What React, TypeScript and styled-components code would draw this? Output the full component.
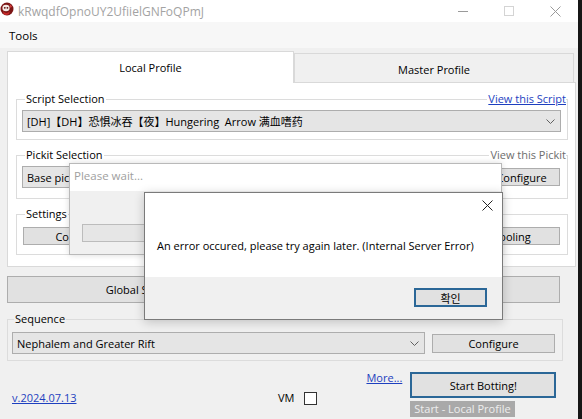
import React from 'react'
import styled, { createGlobalStyle } from 'styled-components'

const GlobalStyle = createGlobalStyle`
  html, body {
    margin: 0;
    padding: 0;
    background: #161616;
  }
  body {
    font-family: 'Open Sans', 'Noto Sans CJK SC', sans-serif;
    font-size: 11px;
    color: #000;
  }
  * {
    box-sizing: border-box;
  }
`

const Screen = styled.div`
  width: 582px;
  height: 419px;
  background: #161616;
  overflow: hidden;
`

const Window = styled.div`
  position: relative;
  width: 578px;
  height: 419px;
  background: #f0f0f0;
  display: flex;
  flex-direction: column;
`

const TitleBar = styled.div`
  height: 22px;
  background: #fff;
  display: flex;
  align-items: center;
`

const AppIcon = styled.svg`
  width: 14px;
  height: 14px;
  align-self: flex-start;
  margin: 2px 4px 0 0;
  flex: none;
`

const TitleText = styled.span`
  font-size: 12px;
  color: #a3a3a3;
`

const Controls = styled.div`
  margin-left: auto;
  display: flex;
  height: 100%;
`

const ControlBox = styled.div`
  width: 46px;
  height: 100%;
  display: flex;
  align-items: center;
  justify-content: center;
`

const MenuBar = styled.div`
  height: 26px;
  background: #f7f7f7;
  display: flex;
  align-items: center;
  padding-left: 9px;
`

const MenuItem = styled.span`
  font-size: 11.5px;
`

const Body = styled.div`
  flex: 1;
  display: flex;
  flex-direction: column;
  padding: 3px 2px 0 7px;
`

const TabStrip = styled.div`
  display: flex;
  align-items: flex-end;
  height: 31px;
`

const Tab = styled.div<{ $active?: boolean; $width: number }>`
  position: relative;
  z-index: ${(p) => (p.$active ? 1 : 0)};
  width: ${(p) => p.$width}px;
  height: ${(p) => (p.$active ? 32 : 29)}px;
  margin-bottom: ${(p) => (p.$active ? -1 : 0)}px;
  padding-top: ${(p) => (p.$active ? 0 : 2)}px;
  background: ${(p) => (p.$active ? '#fff' : '#f0f0f0')};
  border: 1px solid #d9d9d9;
  border-bottom: none;
  display: flex;
  align-items: center;
  justify-content: center;
`

const TabPanel = styled.div`
  height: 185px;
  background: #fff;
  border: 1px solid #d9d9d9;
  padding: 8px 7px 0 8px;
  display: flex;
  flex-direction: column;
  gap: 7px;
`

const GroupWrap = styled.div<{ $width?: number }>`
  position: relative;
  width: ${(p) => (p.$width ? `${p.$width}px` : 'auto')};
`

const Group = styled.fieldset<{ $pad: string }>`
  margin: 0;
  min-width: 0;
  padding: ${(p) => p.$pad};
  border: 1px solid #dcdcdc;
`

const Legend = styled.legend<{ $indent: number }>`
  padding: 0 1px;
  margin-left: ${(p) => p.$indent}px;
  height: 16px;
  line-height: 16px;
`

const CornerLink = styled.span<{ $disabled?: boolean }>`
  position: absolute;
  top: 0;
  right: 2px;
  line-height: 16px;
  padding-left: 1px;
  background: #fff;
  color: ${(p) => (p.$disabled ? '#6d6d6d' : '#1d3fbf')};
  text-decoration: ${(p) => (p.$disabled ? 'none' : 'underline')};
`

const Row = styled.div<{ $gap?: number }>`
  display: flex;
  align-items: center;
  gap: ${(p) => p.$gap ?? 7}px;
`

const ButtonGrid = styled.div`
  display: grid;
  grid-template-columns: 115px 1fr 1fr 96px;
  gap: 8px;
  margin-left: 1px;
`

const Combo = styled.div<{ $width?: number }>`
  flex: ${(p) => (p.$width ? 'none' : 1)};
  width: ${(p) => (p.$width ? `${p.$width}px` : 'auto')};
  min-width: 0;
  height: 22px;
  background: #e5e5e5;
  border: 1px solid #adadad;
  display: flex;
  align-items: center;
  padding: 0 5px 0 4px;
  white-space: nowrap;
  overflow: hidden;
`

const ComboText = styled.span`
  flex: 1;
  overflow: hidden;
`

const Chevron = styled.svg`
  width: 9px;
  height: 5px;
  flex: none;
  margin-top: 1px;
`

const Button = styled.div<{ $width?: number; $height: number; $default?: boolean }>`
  width: ${(p) => (p.$width ? `${p.$width}px` : 'auto')};
  height: ${(p) => p.$height}px;
  flex: none;
  background: #e1e1e1;
  border: ${(p) => (p.$default ? '2px solid #2b6797' : '1px solid #adadad')};
  display: flex;
  align-items: center;
  justify-content: center;
  white-space: nowrap;
  overflow: hidden;
`

const WideRow = styled.div`
  display: flex;
  gap: 7px;
  width: 553px;
  height: 27px;
  margin-top: 9px;
`

const WideButton = styled(Button)`
  height: 100%;
`

const Footer = styled.div`
  display: flex;
  align-items: flex-start;
  padding-left: 5px;
`

const Link = styled.span`
  color: #1d3fbf;
  text-decoration: underline;
  line-height: 16px;
`

const VersionLink = styled(Link)`
  width: 266px;
  margin-top: 29px;
`

const MoreLink = styled(Link)`
  margin: 9px 0 0 49px;
`

const VmBox = styled.div`
  display: flex;
  align-items: center;
  gap: 10px;
  margin-top: 29px;
  line-height: 16px;
`

const CheckBox = styled.div`
  width: 13px;
  height: 13px;
  background: #fff;
  border: 1px solid #333;
`

const StartColumn = styled.div`
  display: flex;
  flex-direction: column;
  align-items: flex-start;
  margin: 11px 0 0 8px;
  gap: 3px;
`

const StatusTag = styled.div`
  height: 16px;
  line-height: 16px;
  padding: 0 4px;
  background: #a9a9a9;
  color: #eeeeee;
`

const WaitDialog = styled.div`
  position: absolute;
  left: 69px;
  top: 163px;
  width: 433px;
  height: 92px;
  background: #f0f0f0;
  border: 1px solid #b9b9b9;
  box-shadow: 0 0 6px rgba(0, 0, 0, 0.15);
  display: flex;
  flex-direction: column;
`

const WaitTitle = styled.div`
  height: 27px;
  background: #fff;
  color: #a0a0a0;
  padding: 4px 0 0 4px;
  font-size: 11.5px;
`

const Progress = styled.div`
  width: 400px;
  height: 18px;
  margin: 33px 0 0 12px;
  background: #e6e6e6;
  border: 1px solid #bcbcbc;
`

const ErrorDialog = styled.div`
  position: absolute;
  left: 144px;
  top: 192px;
  width: 359px;
  height: 128px;
  background: #fff;
  border: 1px solid #7a7a7a;
  box-shadow: 0 2px 10px rgba(0, 0, 0, 0.2);
  display: flex;
  flex-direction: column;
`

const ErrorTop = styled.div`
  height: 84px;
  display: flex;
  flex-direction: column;
`

const CloseRow = styled.div`
  height: 24px;
  display: flex;
  justify-content: flex-end;
`

const CloseBox = styled.div`
  width: 30px;
  display: flex;
  align-items: center;
  justify-content: center;
`

const Message = styled.div`
  margin: 21px 0 0 12px;
  line-height: 16px;
`

const ErrorFooter = styled.div`
  flex: 1;
  background: #f0f0f0;
  display: flex;
  justify-content: flex-end;
  padding: 11px 15px 0 0;
`

const ChevronIcon = () => (
  <Chevron viewBox="0 0 9 5">
    <path d="M0.5 0.5 L4.5 4.5 L8.5 0.5" fill="none" stroke="#606060" strokeWidth="1" />
  </Chevron>
)

const App: React.FC = () => {
  return (
    <Screen>
      <GlobalStyle />
      <Window>
        <TitleBar>
          <AppIcon viewBox="0 0 14 14">
            <circle cx="7" cy="7" r="6.5" fill="#7c1616" />
            <ellipse cx="6" cy="6" rx="3.6" ry="3.2" fill="#f3e9e4" />
            <path d="M3 9 Q6 13 10 9 L9 12 Q6 14 3.5 12 Z" fill="#c52a2a" />
            <circle cx="4.8" cy="5.8" r="0.9" fill="#5a0d0d" />
            <circle cx="7.4" cy="5.8" r="0.9" fill="#5a0d0d" />
            <path d="M9.5 2 L12 4.5 L10.5 6 Z" fill="#e04040" />
          </AppIcon>
          <TitleText>kRwqdfOpnoUY2UfiielGNFoQPmJ</TitleText>
          <Controls>
            <ControlBox>
              <svg width="10" height="10" viewBox="0 0 10 10">
                <path d="M0 5.5 H10" stroke="#9a9a9a" strokeWidth="1" />
              </svg>
            </ControlBox>
            <ControlBox>
              <svg width="10" height="10" viewBox="0 0 10 10">
                <rect x="0.5" y="0.5" width="9" height="9" fill="none" stroke="#d4d4d4" strokeWidth="1" />
              </svg>
            </ControlBox>
            <ControlBox>
              <svg width="11" height="11" viewBox="0 0 11 11">
                <path d="M0.5 0.5 L10.5 10.5 M10.5 0.5 L0.5 10.5" stroke="#9a9a9a" strokeWidth="1" />
              </svg>
            </ControlBox>
          </Controls>
        </TitleBar>
        <MenuBar>
          <MenuItem>Tools</MenuItem>
        </MenuBar>
        <Body>
          <TabStrip>
            <Tab $active $width={287}>Local Profile</Tab>
            <Tab $width={280}>Master Profile</Tab>
          </TabStrip>
          <TabPanel>
            <GroupWrap>
              <Group $pad="3px 6px 7px 5px">
                <Legend $indent={3}>Script Selection</Legend>
                <Combo>
                  <ComboText>[DH]【DH】恐惧冰吞【夜】Hungering&nbsp; Arrow 满血嗜药</ComboText>
                  <ChevronIcon />
                </Combo>
              </Group>
              <CornerLink>View this Script</CornerLink>
            </GroupWrap>
            <GroupWrap>
              <Group $pad="3px 7px 10px 5px">
                <Legend $indent={3}>Pickit Selection</Legend>
                <Row>
                  <Combo>
                    <ComboText>Base pickit</ComboText>
                    <ChevronIcon />
                  </Combo>
                  <Button $width={77} $height={18}>Configure</Button>
                </Row>
              </Group>
              <CornerLink $disabled>View this Pickit</CornerLink>
            </GroupWrap>
            <GroupWrap>
              <Group $pad="5px 7px 9px 5px">
                <Legend $indent={3}>Settings</Legend>
                <ButtonGrid>
                  <Button $height={18}>Configure</Button>
                  <Button $height={18}>Hotkeys</Button>
                  <Button $height={18}>Plugins</Button>
                  <Button $height={18}>Tooling</Button>
                </ButtonGrid>
              </Group>
            </GroupWrap>
          </TabPanel>
          <WideRow>
            <WideButton $width={274} $height={27}>Global Settings</WideButton>
            <WideButton $width={272} $height={27}>Plugin Settings</WideButton>
          </WideRow>
          <GroupWrap $width={556} style={{ marginTop: 8 }}>
            <Group $pad="5px 7px 6px 4px">
              <Legend $indent={2}>Sequence</Legend>
              <Row>
                <Combo $width={413}>
                  <ComboText>Nephalem and Greater Rift</ComboText>
                  <ChevronIcon />
                </Combo>
                <Button $width={123} $height={19}>Configure</Button>
              </Row>
            </Group>
          </GroupWrap>
          <Footer>
            <VersionLink>v.2024.07.13</VersionLink>
            <VmBox>
              <span>VM</span>
              <CheckBox />
            </VmBox>
            <MoreLink>More...</MoreLink>
            <StartColumn>
              <Button $width={146} $height={26} $default>Start Botting!</Button>
              <StatusTag>Start - Local Profile</StatusTag>
            </StartColumn>
          </Footer>
        </Body>

        <WaitDialog>
          <WaitTitle>Please wait...</WaitTitle>
          <Progress />
        </WaitDialog>

        <ErrorDialog>
          <ErrorTop>
            <CloseRow>
              <CloseBox>
                <svg width="11" height="11" viewBox="0 0 11 11">
                  <path d="M0.5 0.5 L10.5 10.5 M10.5 0.5 L0.5 10.5" stroke="#222" strokeWidth="1" />
                </svg>
              </CloseBox>
            </CloseRow>
            <Message>An error occured, please try again later. (Internal Server Error)</Message>
          </ErrorTop>
          <ErrorFooter>
            <Button $width={73} $height={19} $default>확인</Button>
          </ErrorFooter>
        </ErrorDialog>
      </Window>
    </Screen>
  )
}

export default App
